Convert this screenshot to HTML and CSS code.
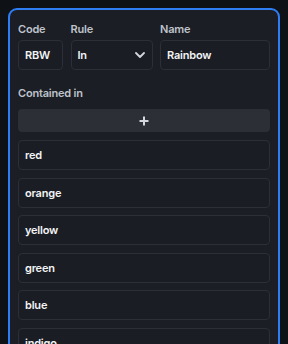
FILE: index.html
```html
<!DOCTYPE html>
<html lang="en">
<head>
    <meta charset="UTF-8">
    <meta name="viewport" content="width=device-width, initial-scale=1.0">
    <title>Set editor</title>
    <link rel="stylesheet" href="styles.css">
</head>
<body>
    <div class="card">
        <div class="fields">
            <div class="field">
                <label>Code</label>
                <div class="box">RBW</div>
            </div>
            <div class="field">
                <label>Rule</label>
                <div class="box select">
                    <span>In</span>
                    <svg width="10" height="6" viewBox="0 0 10 6"><polyline points="1,1 5,5 9,1" fill="none" stroke="#d3d6dc" stroke-width="1.8" stroke-linecap="round" stroke-linejoin="round"/></svg>
                </div>
            </div>
            <div class="field">
                <label>Name</label>
                <div class="box">Rainbow</div>
            </div>
        </div>
        <label class="section">Contained in</label>
        <button class="add">
            <svg width="10" height="10" viewBox="0 0 10 10"><path d="M5 0.5v9M0.5 5h9" stroke="#d3d6dc" stroke-width="2"/></svg>
        </button>
        <div class="items">
            <div class="box item">red</div>
            <div class="box item">orange</div>
            <div class="box item">yellow</div>
            <div class="box item">green</div>
            <div class="box item">blue</div>
            <div class="box item">indigo</div>
            <div class="box item">violet</div>
        </div>
    </div>
</body>
</html>
```

FILE: styles.css
```css
body{
    margin: 8px;
    background-color: #0e1116;
    font-family: Inter, "Liberation Sans", sans-serif;
    font-size: 11px;
    font-weight: 600;
    letter-spacing: -0.2px;
    color: #f2f3f5;
}
.card{
    border: 2px solid #2f7df3;
    border-radius: 9px;
    background-color: #1b1e25;
    padding: 12px 8px 8px;
}
.fields{
    display: grid;
    grid-template-columns: 45px 82px 1fr;
    column-gap: 7.5px;
}
.field{
    display: flex;
    flex-direction: column;
    gap: 4px;
}
label{
    display: block;
    line-height: 14px;
    color: #bfc3ca;
}
.box{
    height: 30px;
    box-sizing: border-box;
    border: 1px solid #2b2f37;
    border-radius: 4px;
    background-color: #1a1d23;
    padding: 0 6px;
    display: flex;
    align-items: center;
}
.select{
    justify-content: space-between;
    padding-right: 7px;
}
.section{
    margin-top: 16px;
}
.add{
    display: flex;
    align-items: center;
    justify-content: center;
    width: 100%;
    height: 23px;
    margin-top: 9px;
    border: none;
    border-radius: 4px;
    background-color: #2c2f36;
    padding: 0;
}
.items{
    display: flex;
    flex-direction: column;
    gap: 7.5px;
    margin-top: 8px;
}
.item{
    padding-left: 6px;
}
```
